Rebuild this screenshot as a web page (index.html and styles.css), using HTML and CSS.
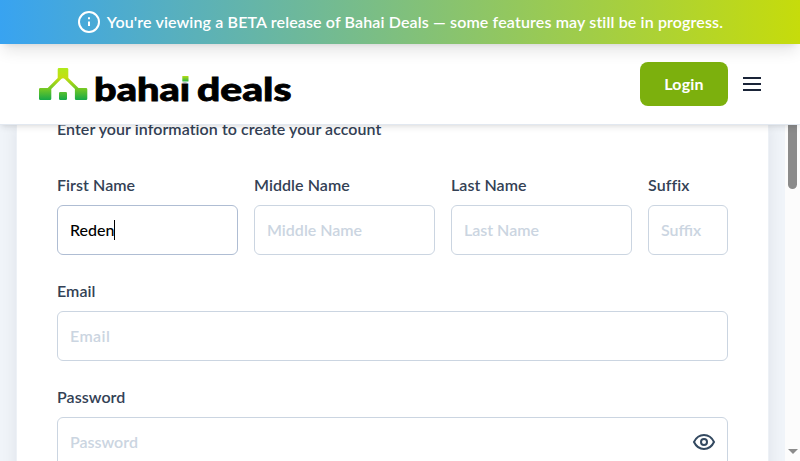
FILE: index.html
```html
<!DOCTYPE html>
<html lang="en">
<head>
<meta charset="utf-8">
<title>Bahai Deals</title>
<link rel="stylesheet" href="styles.css">
</head>
<body>
<div class="banner">
  <svg width="24" height="24" viewBox="0 0 24 24" fill="none" stroke="#fff" stroke-width="2"><circle cx="12" cy="12" r="10"/><path d="M12 11.500v4.500M12 7.200v2"/></svg>
  <span>You're viewing a BETA release of Bahai Deals — some features may still be in progress.</span>
</div>
<header class="header">
  <svg class="logo" width="260" height="40" viewBox="0 0 260 40">
    <defs>
      <linearGradient id="roof" gradientUnits="userSpaceOnUse" x1="0" y1="4" x2="0" y2="36"><stop offset="0" stop-color="#afea1b"/><stop offset=".3" stop-color="#c4df10"/><stop offset=".65" stop-color="#74c824"/><stop offset="1" stop-color="#16a948"/></linearGradient>
      <linearGradient id="dot" x1="0" y1="0" x2="0" y2="1"><stop offset="0" stop-color="#b7dc13"/><stop offset="1" stop-color="#2eb544"/></linearGradient>
    </defs>
    <g fill="url(#roof)">
      <path d="M20 4h8q1.300 0 1.300 1.300v8.700L39.500 24H47q1.300 0 1.300 1.300v9.400Q48.300 36 47 36H37.200q-1.300 0-1.300-1.300V25L26 15.200q-2-2-4 0L12.300 25v9.700Q12.300 36 11 36H1.300Q0 36 0 34.700v-9.400Q0 24 1.300 24H8.700L18.700 14V5.300Q18.700 4 20 4z"/>
      <rect x="20" y="28" width="8" height="8" rx="1.200"/>
    </g>
    <text class="wordmark" y="36.500"><tspan x="55" textLength="96" lengthAdjust="spacingAndGlyphs">bahai</tspan><tspan x="158" textLength="94.500" lengthAdjust="spacingAndGlyphs">deals</tspan></text>
    <path d="M140 9h13v9.700h-13z" fill="#fff"/>
    <rect x="143.300" y="12" width="6.200" height="5.500" rx=".6" fill="url(#dot)"/>
  </svg>
  <nav class="actions">
    <button class="login">Login</button>
    <svg width="20" height="16" viewBox="0 0 20 16" stroke="#1a2438" stroke-width="2"><path d="M1 2h18M1 8h18M1 14h18"/></svg>
  </nav>
</header>
<main class="viewport">
  <div class="page">
    <form class="card">
      <p class="intro">Enter your information to create your account</p>
      <div class="names">
        <label class="field"><span>First Name</span><div class="control"><input class="active" value="Reden"><i class="caret"></i></div></label>
        <label class="field"><span>Middle Name</span><input placeholder="Middle Name"></label>
        <label class="field"><span>Last Name</span><input placeholder="Last Name"></label>
        <label class="field"><span>Suffix</span><input placeholder="Suffix"></label>
      </div>
      <label class="field"><span>Email</span><input class="email" placeholder="Email"></label>
      <label class="field"><span>Password</span><div class="control"><input placeholder="Password">
        <svg class="eye" width="24" height="24" viewBox="0 0 24 24" fill="none" stroke="#334960" stroke-width="2"><path d="M2 12c2.200-4.600 5.500-7 10-7s7.800 2.400 10 7c-2.200 4.600-5.500 7-10 7s-7.800-2.400-10-7z"/><circle cx="12" cy="12" r="3"/></svg></div></label>
    </form>
  </div>
  <div class="scrollbar"><div class="thumb"></div><div class="arrow"></div></div>
</main>
</body>
</html>
```
FILE: styles.css
```css
* { box-sizing: border-box; }
body { margin: 0; height: 461px; overflow: hidden; display: flex; flex-direction: column; background: #fff; color: #334155; font: 600 16px/24px Lato, "Liberation Sans", sans-serif; letter-spacing: .06px; }
.banner { position: relative; z-index: 3; flex: none; height: 44px; display: flex; align-items: center; justify-content: center; gap: 6px; white-space: nowrap; color: #fff; letter-spacing: .14px; background: linear-gradient(90deg, #38a3f1, #c6dc0b); box-shadow: 0 10px 15px -3px #0000001a, 0 4px 6px -4px #0000001a; }
.header { position: relative; z-index: 2; flex: none; height: 81px; padding: 0 38px 0 39px; display: flex; align-items: center; justify-content: space-between; background: #fff; border-bottom: 1px solid #e2e8f0; box-shadow: 0 4px 6px -1px #00000014, 0 2px 4px -2px #00000014; }
.wordmark { font-family: Lato, sans-serif; font-size: 32px; font-weight: 900; letter-spacing: 0; fill: #000; stroke: #000; stroke-width: .8px; }
.actions { display: flex; align-items: center; gap: 14px; }
.login { width: 88px; height: 44px; border: 0; border-radius: 8px; background: #7cb00d; color: #fff; font: inherit; font-weight: 700; letter-spacing: .2px; }
.viewport { flex: 1; min-height: 0; overflow: hidden; display: flex; }
.page { flex: 1; padding: 0 16px; background: #f0f4f9; }
.card { height: 420px; padding: 0 40px; border: solid #edf1f6; border-width: 0 1px; background: #fff; box-shadow: 0 0 15px #0f172a14; display: flex; flex-direction: column; gap: 24px; }
.intro { margin: -8px 0 8px; }
.names { display: grid; grid-template-columns: 1fr 1fr 1fr 80px; gap: 16px; }
.field { display: flex; flex-direction: column; gap: 8px; min-width: 0; }
.field > span { white-space: nowrap; }
.control { position: relative; }
input { display: block; width: 100%; height: 50px; padding: 0 12px 2px; border: 1px solid #cbd5e1; border-radius: 6px; outline: 0; background: #fff; font: inherit; letter-spacing: 0; color: #000; }
input.active { border-color: #afbdd3; font-weight: 500; }
input.email { letter-spacing: .4px; }
input::placeholder { color: #cbd5e1; opacity: 1; }
.caret { position: absolute; left: 57px; top: 15px; width: 1px; height: 20px; background: #000; }
.eye { position: absolute; right: 12px; top: 13px; }
.scrollbar { width: 15px; background: #fcfcfc; display: flex; flex-direction: column; align-items: center; justify-content: space-between; }
.thumb { width: 9px; height: 64px; border-radius: 0 0 5px 5px; background: #8b8b8b; }
.arrow { margin-bottom: 7px; border: solid transparent; border-width: 5px 5px 0; border-top-color: #8b8b8b; }
```
